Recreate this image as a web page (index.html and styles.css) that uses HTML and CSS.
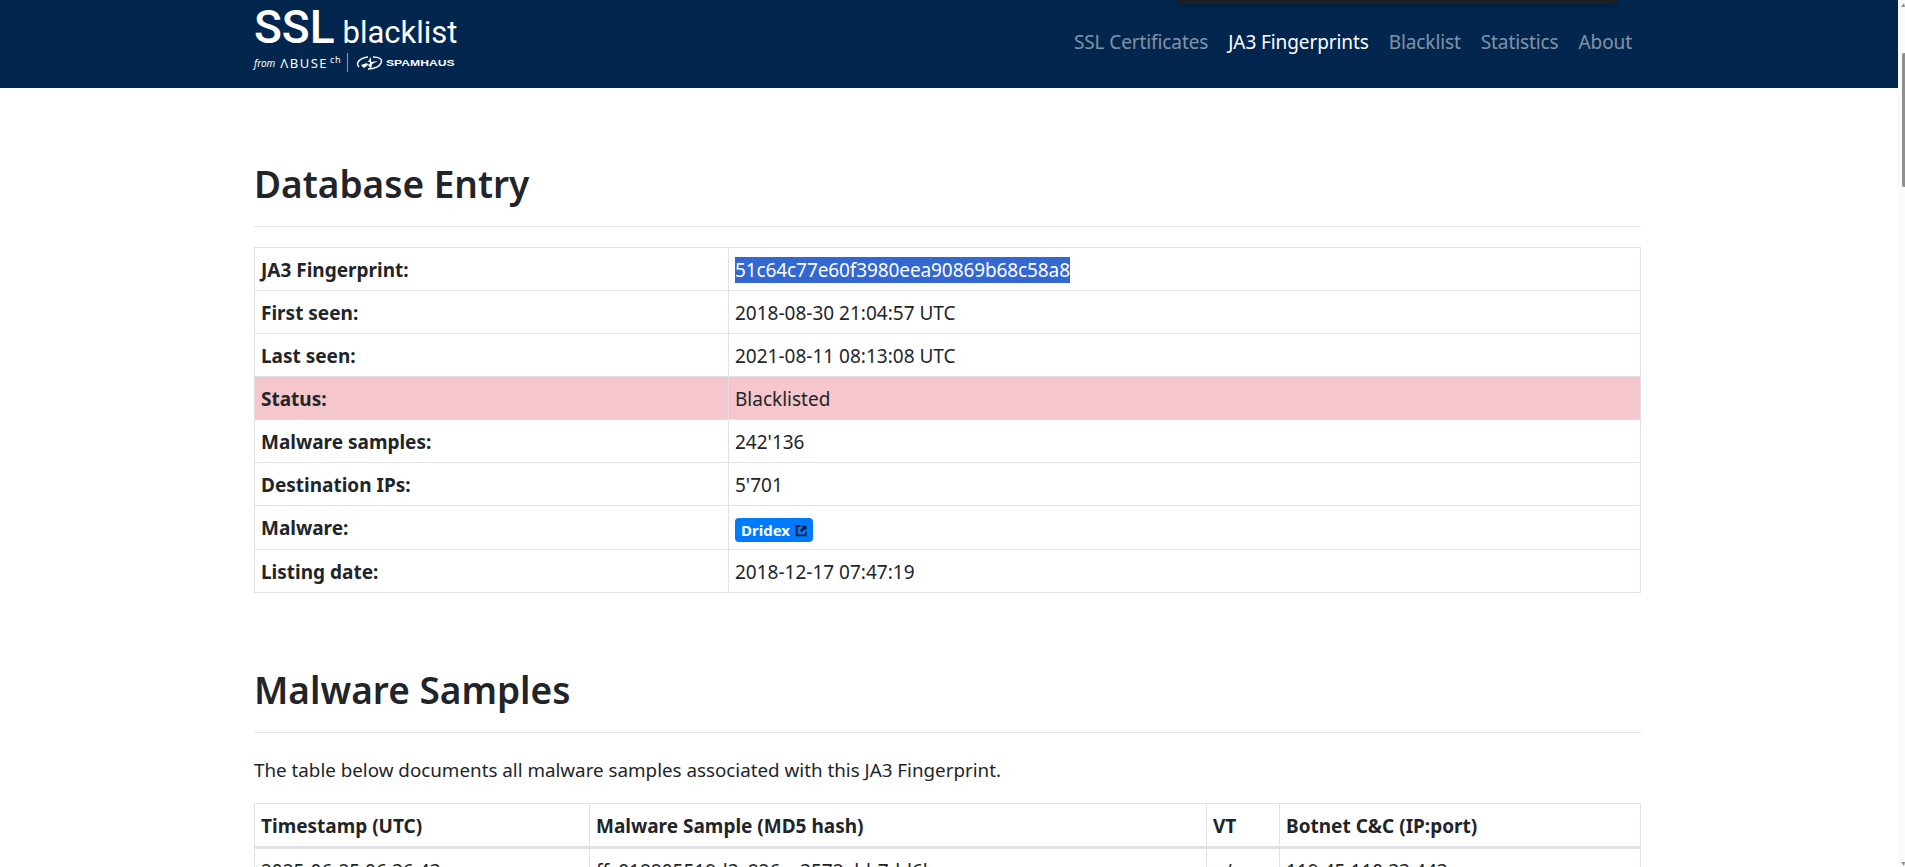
FILE: index.html
```html
<!DOCTYPE html>
<html lang="en">
<head>
  <meta charset="UTF-8" />
  <title>SSL Blacklist</title>
  <link rel="stylesheet" href="styles.css">
</head>
<body>
  <div class="page">
    <header class="topbar">
      <div class="popup-edge"></div>
      <div class="container topbar-inner">
        <a class="logo" href="#">
          <div class="logo-main"><span class="logo-ssl">SSL</span><span class="logo-black">blacklist</span></div>
          <div class="logo-sub">
            <span class="logo-from">from</span>
            <span class="logo-abuse">&#923;BUSE</span><span class="logo-ch">ch</span>
            <span class="logo-sep"></span>
            <svg class="logo-mark" width="28" height="16" viewBox="0 0 28 16">
              <path d="M4 12C0 8 5 3 13 2" fill="none" stroke="#fff" stroke-width="1.500"/>
              <path d="M18 2c6 0 10 2 8 6-1 3-6 6-13 6" fill="none" stroke="#fff" stroke-width="1.500"/>
              <path d="M6 10l6-2 4-6 0 5 7-1-6 3-1 5-3-4-4 3z" fill="#fff"/>
              <circle cx="13.500" cy="8" r="1.500" fill="#03264f"/>
            </svg>
            <span class="logo-spam">SPAMHAUS</span>
          </div>
        </a>
        <nav class="mainnav">
          <a href="#">SSL Certificates</a>
          <a href="#" class="active">JA3 Fingerprints</a>
          <a href="#">Blacklist</a>
          <a href="#">Statistics</a>
          <a href="#">About</a>
        </nav>
      </div>
    </header>

    <main class="container">
      <h2 class="title first">Database Entry</h2>
      <table class="grid entry">
        <tr><th>JA3 Fingerprint:</th><td><span class="selected">51c64c77e60f3980eea90869b68c58a8</span></td></tr>
        <tr><th>First seen:</th><td>2018-08-30 21:04:57 UTC</td></tr>
        <tr><th>Last seen:</th><td>2021-08-11 08:13:08 UTC</td></tr>
        <tr class="danger"><th>Status:</th><td>Blacklisted</td></tr>
        <tr><th>Malware samples:</th><td>242'136</td></tr>
        <tr><th>Destination IPs:</th><td>5'701</td></tr>
        <tr><th>Malware:</th><td><a class="badge" href="#">Dridex
          <svg width="13" height="13" viewBox="0 0 12 12"><path d="M5 2H1.500v8.500H10V7" fill="none" stroke="#0b1a33" stroke-width="1.500"/><path d="M6 1.500h4.500V6L9 4.500 6 7.500 4.500 6l3-3z" fill="#0b1a33"/></svg></a></td></tr>
        <tr><th>Listing date:</th><td>2018-12-17 07:47:19</td></tr>
      </table>

      <h2 class="title second">Malware Samples</h2>
      <p class="intro">The table below documents all malware samples associated with this JA3 Fingerprint.</p>
      <table class="grid samples">
        <thead>
          <tr><th class="c1">Timestamp (UTC)</th><th class="c2">Malware Sample (MD5 hash)</th><th class="c3">VT</th><th>Botnet C&amp;C (IP:port)</th></tr>
        </thead>
        <tbody>
          <tr><td>2025-06-25 06:36:43</td><td>ffc018805519d3c826ec3572ebb7dd6b</td><td>n/a</td><td>119.45.110.33:443</td></tr>
        </tbody>
      </table>
    </main>
  </div>

  <div class="scrollbar">
    <span class="arrow-up"></span>
    <span class="thumb"></span>
    <span class="arrow-down"></span>
  </div>
</body>
</html>
```

FILE: styles.css
```css
html, body {
  margin: 0;
  height: 867px;
  overflow: hidden;
  background: #fff;
}
body {
  display: flex;
  font-family: "Noto Sans", "Open Sans", sans-serif;
  font-size: 19px;
  line-height: 24px;
  color: #212529;
}
.page {
  width: 1898px;
  flex: none;
}
.container {
  width: 1387px;
  margin-left: 254px;
}

/* Scrollbar */
.scrollbar {
  position: relative;
  flex: 1;
  background: #fbfbfb;
}
.thumb {
  position: absolute;
  top: 53px;
  right: 0;
  width: 3px;
  height: 134px;
  background: #8f8f8f;
  border-radius: 2px 0 0 2px;
}
.arrow-up, .arrow-down {
  position: absolute;
  right: 0;
  width: 0;
  height: 0;
  border-left: 3px solid transparent;
  border-right: 1px solid transparent;
}
.arrow-up {
  top: 3px;
  border-bottom: 4px solid #8f8f8f;
}
.arrow-down {
  bottom: 1px;
  border-top: 4px solid #8f8f8f;
}

/* Header */
.topbar {
  position: relative;
  height: 88px;
  background: #03264f;
}
.popup-edge {
  position: absolute;
  left: 1177px;
  top: 0;
  width: 440px;
  height: 4px;
  background: #1c1f26;
  border-radius: 0 0 6px 6px;
  box-shadow: 0 1px 5px rgba(0, 0, 0, 0.35);
}
.topbar-inner {
  display: flex;
  justify-content: space-between;
}
.logo {
  display: block;
  color: #fff;
  text-decoration: none;
}
.logo-main {
  display: flex;
  align-items: baseline;
  gap: 8px;
  height: 54px;
  line-height: 54px;
  white-space: nowrap;
}
.logo-ssl {
  font-family: Roboto, sans-serif;
  font-size: 46px;
  font-weight: 500;
}
.logo-black {
  font-family: Roboto, sans-serif;
  font-size: 31px;
  font-weight: 400;
}
.logo-sub {
  display: flex;
  align-items: center;
  height: 19px;
  margin-top: -1px;
}
.logo-from {
  font-size: 10px;
  line-height: 14px;
  font-style: italic;
  margin-right: 5px;
}
.logo-abuse {
  font-size: 13px;
  line-height: 14px;
  letter-spacing: 1.500px;
}
.logo-ch {
  font-size: 9px;
  line-height: 12px;
  margin: 0 0 5px 2px;
  letter-spacing: 0.5px;
}
.logo-sep {
  width: 1px;
  height: 19px;
  background: #8d9cb0;
  margin: 0 7px 0 6px;
}
.logo-mark {
  margin-right: 3px;
}
.logo-spam {
  font-family: "Liberation Sans", sans-serif;
  font-size: 9px;
  line-height: 12px;
  font-weight: 700;
  transform: scaleX(1.35);
  transform-origin: left center;
}
.mainnav {
  display: flex;
  gap: 20px;
  padding-top: 30px;
  padding-right: 9px;
}
.mainnav a {
  color: rgba(255, 255, 255, 0.5);
  font-size: 19px;
  letter-spacing: -0.1px;
  text-decoration: none;
}
.mainnav a.active {
  color: #fff;
}

/* Headings */
.title {
  margin: 0;
  font-size: 37px;
  line-height: 46px;
  font-weight: 600;
  padding-bottom: 19px;
  border-bottom: 1px solid #e2e4e6;
}
.title.first {
  margin-top: 73px;
  margin-bottom: 20px;
}
.title.second {
  margin-top: 74px;
}
.intro {
  margin: 25px 0 21px;
  font-size: 18.800px;
}

/* Tables */
.grid {
  width: 100%;
  table-layout: fixed;
  border-collapse: collapse;
}
.grid th, .grid td {
  border: 1px solid #dee2e6;
  padding: 10px 6px 8px;
  text-align: left;
  font-weight: 400;
  vertical-align: top;
  white-space: nowrap;
}
.grid th {
  font-weight: 700;
}
.entry th {
  width: 474px;
  box-sizing: border-box;
}
.entry .danger th, .entry .danger td {
  background: #f5c6cb;
}
.selected {
  background: #3367d1;
  color: #fff;
  letter-spacing: -0.1px;
}
.badge {
  display: flex;
  align-items: center;
  gap: 5px;
  width: fit-content;
  margin: 2px 0 -1px;
  background: #007bff;
  color: #fff;
  font-size: 15px;
  font-weight: 700;
  line-height: 14px;
  padding: 5px 5px 5px 6px;
  border-radius: 4px;
  text-decoration: none;
}
.samples thead th {
  border-bottom: 3px solid #dee2e6;
}
.samples .c1 { width: 335px; box-sizing: border-box; }
.samples .c2 { width: 617px; box-sizing: border-box; }
.samples .c3 { width: 73px; box-sizing: border-box; }
```
